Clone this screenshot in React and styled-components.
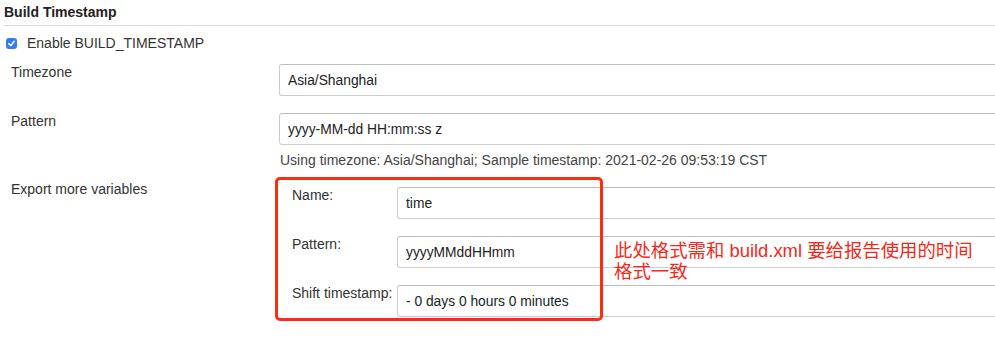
import React from "react";
import styled, {createGlobalStyle} from "styled-components";

const GlobalStyle = createGlobalStyle`
  html, body {
    margin: 0;
    padding: 0;
    background: #fff;
    overflow: hidden;
  }
  body {
    font-family: "Liberation Sans", Arial, "Noto Sans CJK SC", sans-serif;
    font-size: 14px;
    color: #333;
  }
`;

const Page = styled.div`
  width: 1010px;
  height: 341px;
`;

const SectionHeader = styled.div`
  margin-left: 3px;
  padding: 4px 0 5px 1px;
  font-weight: bold;
  font-size: 14px;
  line-height: 16px;
  color: #222;
  border-bottom: 1px solid #ddd;
`;

const CheckRow = styled.label`
  display: flex;
  align-items: center;
  height: 18px;
  margin-top: 8px;
  padding-left: 6px;
  gap: 10px;
  line-height: 16px;
`;

const CheckBox = styled.span`
  width: 11px;
  height: 11px;
  border-radius: 3px;
  background: #2f7cf6;
  display: flex;
  align-items: center;
  justify-content: center;
`;

const FormGrid = styled.div`
  display: grid;
  grid-template-columns: ${(p) => p.labelWidth}px 1fr;
  row-gap: 17px;
  margin-top: ${(p) => p.top || 0}px;
  padding-left: ${(p) => p.indent || 0}px;
`;

const FieldLabel = styled.div`
  line-height: 16px;
  color: #333;
  margin-top: ${(p) => p.offset || 0}px;
`;

const TextInput = styled.input`
  box-sizing: border-box;
  width: 100%;
  height: 32px;
  padding: 0 8px;
  border: 1px solid #ccc;
  border-top-color: #bdbdbd;
  border-radius: 3px;
  font-family: "Liberation Sans", Arial, sans-serif;
  font-size: 13.8px;
  color: #222;
  background: #fff;
  outline: none;
`;

const HelpText = styled.div`
  grid-column: 2;
  margin-top: -10px;
  padding-left: 1px;
  font-size: 14px;
  line-height: 16px;
  color: #444;
`;

const Nested = styled.div`
  position: relative;
  padding-top: 2px;
`;

const NestedGrid = styled(FormGrid)`
  padding-left: 13px;
`;

/* red annotation frame drawn over the nested fields */
const Highlight = styled.div`
  position: absolute;
  left: -4px;
  top: -8px;
  width: 328px;
  height: 144px;
  box-sizing: border-box;
  border: 3px solid #ff2a14;
  border-radius: 5px;
  pointer-events: none;
`;

const Note = styled.div`
  position: absolute;
  left: 335px;
  top: 55px;
  font-family: "Liberation Sans", Arial, "Noto Sans CJK SC", sans-serif;
  font-size: 18.4px;
  line-height: 21px;
  color: #f5281a;
  white-space: nowrap;
`;

function Field({label, value}) {
    return (
        <>
            <FieldLabel>{label}</FieldLabel>
            <TextInput readOnly defaultValue={value}/>
        </>
    );
}

export default function App() {
    return (
        <Page>
            <GlobalStyle/>
            <SectionHeader>Build Timestamp</SectionHeader>
            <CheckRow>
                <CheckBox>
                    <svg width="9" height="9" viewBox="0 0 10 10">
                        <path d="M2 5.2 L4.2 7.4 L8 2.6" fill="none" stroke="#fff" strokeWidth="1.7"
                              strokeLinecap="round" strokeLinejoin="round"/>
                    </svg>
                </CheckBox>
                Enable BUILD_TIMESTAMP
            </CheckRow>
            <FormGrid labelWidth={268} indent={11} top={12}>
                <Field label="Timezone" value="Asia/Shanghai"/>
                <Field label="Pattern" value="yyyy-MM-dd HH:mm:ss z"/>
                <HelpText>Using timezone: Asia/Shanghai; Sample timestamp: 2021-02-26 09:53:19 CST</HelpText>
                <FieldLabel offset={-4}>Export more variables</FieldLabel>
                <Nested>
                    <Highlight/>
                    <NestedGrid labelWidth={105}>
                        <Field label="Name:" value="time"/>
                        <Field label="Pattern:" value="yyyyMMddHHmm"/>
                        <Field label="Shift timestamp:" value="- 0 days 0 hours 0 minutes"/>
                    </NestedGrid>
                    <Note>此处格式需和 build.xml 要给报告使用的时间<br/>格式一致</Note>
                </Nested>
            </FormGrid>
        </Page>
    );
}
